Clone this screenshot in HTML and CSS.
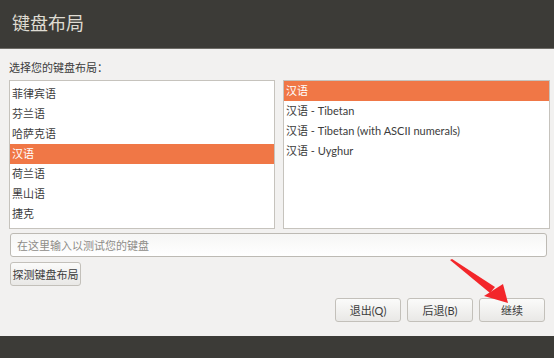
FILE: index.html
```html
<!DOCTYPE html>
<html lang="zh-CN">
<head>
    <meta charset="UTF-8">
    <title>键盘布局</title>
    <link rel="stylesheet" href="styles.css">
</head>
<body>
<div class="header">键盘布局</div>

<div class="main">
    <div class="label">选择您的键盘布局：</div>
    <div class="lists">
        <ul class="list list-left">
            <li>菲律宾语</li>
            <li>芬兰语</li>
            <li>哈萨克语</li>
            <li class="on">汉语</li>
            <li>荷兰语</li>
            <li>黑山语</li>
            <li>捷克</li>
        </ul>
        <ul class="list list-right">
            <li class="on">汉语</li>
            <li>汉语 - Tibetan</li>
            <li>汉语 - Tibetan (with ASCII numerals)</li>
            <li>汉语 - Uyghur</li>
        </ul>
    </div>
    <input class="test" type="text" placeholder="在这里输入以测试您的键盘">
    <div class="detect-row">
        <button class="btn btn-detect">探测键盘布局</button>
    </div>
    <div class="actions">
        <button class="btn">退出(Q)</button>
        <button class="btn">后退(B)</button>
        <button class="btn">继续</button>
    </div>

    <!-- 红色箭头，盖在按钮上 -->
    <svg class="arrow" width="70" height="50" viewBox="0 0 70 50">
        <polygon points="0,0 2,-1 45,27 40,33" fill="#f3262a"/>
        <polygon points="34,36 53,24 58,43" fill="#f3262a"/>
    </svg>
</div>

<div class="footer"></div>
</body>
</html>
```

FILE: styles.css
```css
*{
    box-sizing: border-box;
}
body{
    margin: 0;
    width: 554px;
    height: 358px;
    background: #f2f1f0;
    font-family: Lato, "Noto Sans CJK SC", sans-serif;
    font-size: 11px;
    color: #3c3c3c;
    overflow: hidden;
}
.header{
    height: 49px;
    background: #3c3b37;
    border-bottom: 1px solid #6e6c67;
    color: #dfdbd2;
    font-size: 18px;
    line-height: 46px;
    padding-left: 12px;
}
.main{
    position: relative;
    height: 287px;
    padding: 10px 4px 0 9px;
    display: flex;
    flex-direction: column;
}
.label{
    height: 21px;
    line-height: 18px;
}
.lists{
    display: grid;
    grid-template-columns: 266px 267px;
    gap: 8px;
}
.list{
    list-style: none;
    margin: 0;
    height: 149px;
    background: #fff;
    border: 1px solid #c6c3bd;
    overflow: hidden;
}
.list-left{
    padding: 3px 0 0;
}
.list-right{
    padding: 0;
}
.list li{
    height: 20px;
    line-height: 20px;
    padding-left: 2px;
    white-space: nowrap;
}
.list li.on{
    background: #f07746;
    color: #fff;
}
.test{
    margin: 4px 3px 0 1px;
    height: 24px;
    border: 1px solid #bdbab4;
    border-radius: 3px;
    background: linear-gradient(#f6f6f5, #ffffff);
    padding: 0 6px;
    font: inherit;
    color: #3c3c3c;
}
.test::placeholder{
    color: #8e8c88;
}
.detect-row{
    margin: 5px 0 0 1px;
}
.btn{
    height: 24px;
    border: 1px solid #c3c0ba;
    border-radius: 3px;
    background: linear-gradient(#fbfbfa, #e9e8e6);
    font: inherit;
    color: #3c3c3c;
    padding: 0;
}
.btn-detect{
    width: 71px;
}
.actions{
    margin-top: 12px;
    padding-right: 5px;
    display: flex;
    justify-content: flex-end;
    gap: 6px;
}
.actions .btn{
    width: 66px;
    height: 24px;
}
.arrow{
    position: absolute;
    left: 450px;
    top: 211px;
    overflow: visible;
}
.footer{
    height: 22px;
    background: #3c3b37;
}
```
